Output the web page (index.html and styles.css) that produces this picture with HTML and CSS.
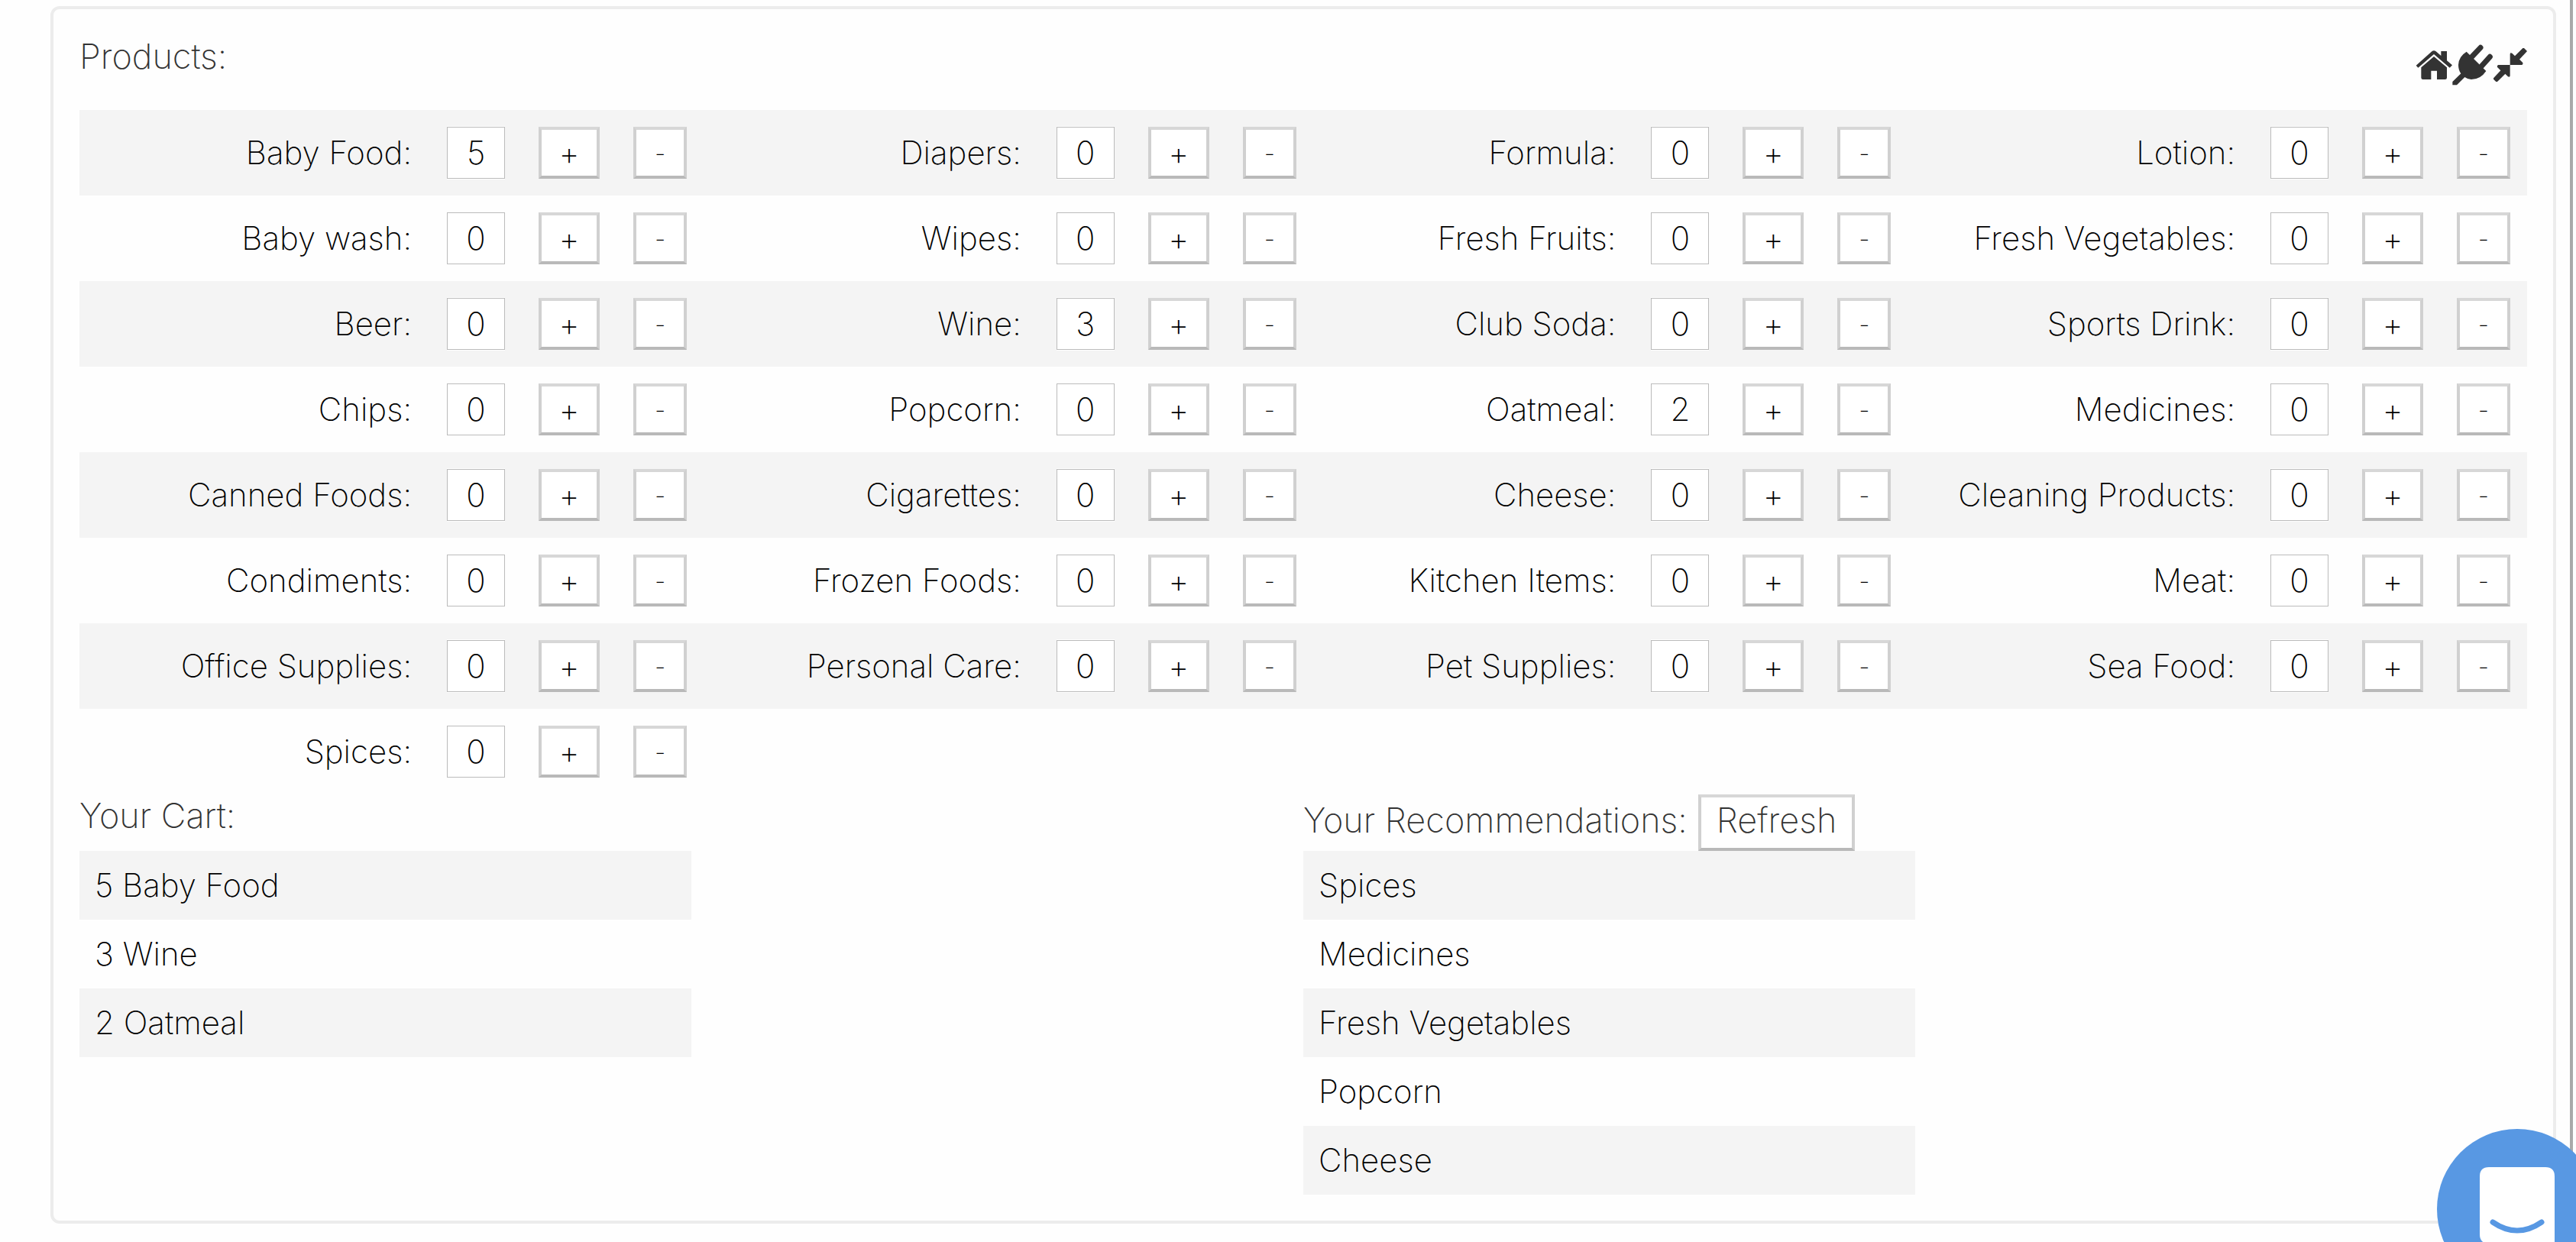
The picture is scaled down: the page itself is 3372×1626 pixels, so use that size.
FILE: index.html
```html
<!DOCTYPE html>
<html lang="en">
<head>
<meta charset="utf-8">
<title>Products</title>
<link rel="stylesheet" href="styles.css">
</head>
<body>
<main class="page">
  <section class="panel">
    <header class="panel-header">
      <h2 class="heading">Products:</h2>
      <nav class="tools">
        <a href="#home" aria-label="Home"><svg width="48" height="55" viewBox="36 24 144 165"><path d="M38 107 100 52q8-6 16 0l20 17V51h23v37l21 18-10 10-62-53-62 53z"/><path d="M58 115l50-43 51 43v40q0 7-7 7h-32v-34H97v34H65q-7 0-7-7z"/></svg></a>
        <a href="#connect" aria-label="Connect"><svg width="54" height="55" viewBox="180 24 162 165"><path d="M236 53l77 76q-22 33-58 33-15-1-26-9l-31 31h-17v-13l33-32q-10-14-10-34 1-33 32-52z"/><path class="prong" d="M258 72l33-35M295 110l33-37"/></svg></a>
        <a href="#compress" aria-label="Compress"><svg width="44" height="55" viewBox="342 24 132 165"><path d="M407 62q1-7 8-3l11 11 31-31h5l12 12-30 32 12 12q4 5-2 10h-47z"/><path d="M407 148q-1 7-8 3l-11-11-31 31h-5l-12-12 30-32-12-12q-4-5 2-10h47z"/></svg></a>
      </nav>
    </header>

    <table class="products">
      <colgroup><col class="col-a"><col class="col-b"><col class="col-c"><col></colgroup>
      <tbody id="rows"></tbody>
    </table>

    <div class="summary">
      <section class="summary-part">
        <div class="summary-title"><h2 class="heading">Your Cart:</h2></div>
        <ul class="list">
          <li>5 Baby Food</li>
          <li>3 Wine</li>
          <li>2 Oatmeal</li>
        </ul>
      </section>
      <section class="summary-part">
        <div class="summary-title with-button"><h2 class="heading">Your Recommendations:</h2><button class="button refresh" type="button">Refresh</button></div>
        <ul class="list">
          <li>Spices</li>
          <li>Medicines</li>
          <li>Fresh Vegetables</li>
          <li>Popcorn</li>
          <li>Cheese</li>
        </ul>
      </section>
    </div>
  </section>
</main>
<button class="chat" type="button" aria-label="Open chat"><svg width="98" height="110" viewBox="0 0 98 110"><path class="chat-face" d="M12 0h74q12 0 12 12v98L80 100H12Q0 100 0 88V12Q0 0 12 0z"/><path class="chat-smile" d="M17 72q32 22 64 0"/></svg></button>
<script src="products.js"></script>
</body>
</html>
```
FILE: products.js
```javascript
const products = [
  ["Baby Food", 5], ["Diapers", 0], ["Formula", 0], ["Lotion", 0],
  ["Baby wash", 0], ["Wipes", 0], ["Fresh Fruits", 0], ["Fresh Vegetables", 0],
  ["Beer", 0], ["Wine", 3], ["Club Soda", 0], ["Sports Drink", 0],
  ["Chips", 0], ["Popcorn", 0], ["Oatmeal", 2], ["Medicines", 0],
  ["Canned Foods", 0], ["Cigarettes", 0], ["Cheese", 0], ["Cleaning Products", 0],
  ["Condiments", 0], ["Frozen Foods", 0], ["Kitchen Items", 0], ["Meat", 0],
  ["Office Supplies", 0], ["Personal Care", 0], ["Pet Supplies", 0], ["Sea Food", 0],
  ["Spices", 0]
];
const perRow = 4;
const body = document.getElementById("rows");

for (let start = 0; start < products.length; start += perRow) {
  const row = body.insertRow();
  for (let i = start; i < start + perRow; i++) {
    const cell = row.insertCell();
    if (!products[i]) continue;
    const [name, count] = products[i];
    cell.innerHTML =
      `<div class="product">
        <label for="p${i}">${name}:</label>
        <input class="count" id="p${i}" type="text" value="${count}">
        <button class="button plus" type="button" aria-label="Add ${name}">+</button>
        <button class="button minus" type="button" aria-label="Remove ${name}">-</button>
      </div>`;
    const input = cell.querySelector("input");
    cell.querySelector(".plus").onclick = () => { input.value = Number(input.value) + 1; };
    cell.querySelector(".minus").onclick = () => { input.value = Math.max(0, Number(input.value) - 1); };
  }
}
```
FILE: styles.css
```css
* {
  box-sizing: border-box;
}

body {
  margin: 0;
  background: #fefefe;
  color: #000;
  font-family: Inter, "Liberation Sans", sans-serif;
  font-size: 42px;
  font-weight: 200;
}

.page {
  min-height: 100vh;
  margin-right: 4px;
  padding: 8px 18px 24px 66px;
  border-right: 4px solid #a9a9a9;
}

.panel {
  padding: 34px;
  border: 4px solid #ececec;
  border-radius: 12px;
}

.panel-header {
  display: flex;
  justify-content: space-between;
  height: 98px;
}

.heading {
  margin: 0;
  color: #333;
  font-size: 45px;
  font-weight: 200;
  line-height: 56px;
}

.tools {
  display: flex;
  align-items: flex-start;
  padding-top: 12px;
}

.tools svg {
  display: block;
  fill: #333;
}

.prong {
  stroke: #333;
  stroke-width: 21;
  stroke-linecap: round;
}

.products {
  width: 100%;
  border-collapse: collapse;
  table-layout: fixed;
}

.col-a {
  width: 25.5%;
}

.col-b {
  width: 24.9%;
}

.col-c {
  width: 24.3%;
}

.products td {
  height: 112px;
  padding: 0 22px 0 0;
}

.products tr:nth-child(odd),
.list li:nth-child(odd) {
  background: #f4f4f4;
}

.product {
  display: flex;
  align-items: center;
  justify-content: flex-end;
  gap: 44px;
  white-space: nowrap;
}

.product label {
  padding: 0 2px 2px 0;
}

.count {
  width: 76px;
  height: 68px;
  padding: 0 0 2px;
  border: 1px solid #bbb;
  border-radius: 0;
  background: #fff;
  box-shadow: 0 1px #fff, 0 -1px #fff;
  color: #000;
  font: inherit;
  text-align: center;
}

.button {
  padding: 0;
  border: 4px solid;
  border-color: #d7d7d7 #d0d0d0 #b9b9b9;
  border-radius: 0;
  background: #fff;
  color: #000;
  font: inherit;
}

.plus {
  width: 80px;
  height: 68px;
}

.minus {
  width: 70px;
  height: 68px;
  font-size: 32px;
}

.summary {
  display: grid;
  grid-template-columns: 1fr 1fr;
}

.summary-title {
  height: 74px;
}

.with-button {
  display: flex;
  align-items: baseline;
  gap: 14px;
}

.refresh {
  height: 74px;
  padding: 0 20px 6px;
  color: #333;
  font-size: 45px;
  line-height: 60px;
}

.list {
  width: 50%;
  margin: 0;
  padding: 0;
  list-style: none;
}

.list li {
  padding: 0 20px;
  line-height: 90px;
}

.chat {
  position: fixed;
  right: -28px;
  bottom: -62px;
  width: 210px;
  height: 210px;
  padding: 50px 56px;
  border: 0;
  border-radius: 50%;
  background: #5898e3;
}

.chat svg {
  display: block;
}

.chat-face {
  fill: #fff;
}

.chat-smile {
  fill: none;
  stroke: #5898e3;
  stroke-width: 7;
  stroke-linecap: round;
}
```
